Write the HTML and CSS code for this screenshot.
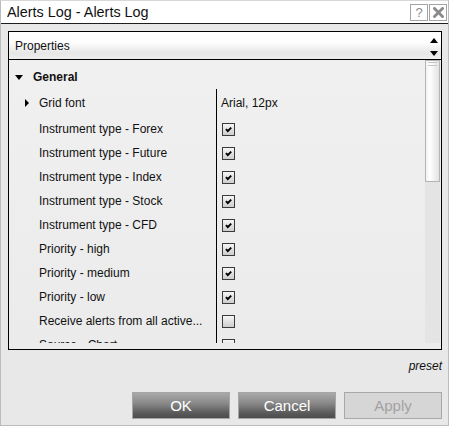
FILE: index.html
```html
<!DOCTYPE html>
<html>
<head>
<meta charset="utf-8">
<link rel="stylesheet" href="styles.css">
</head>
<body>
<div class="window">
  <div class="titlebar">
    <span class="title">Alerts Log - Alerts Log</span>
    <div class="tbtns">
      <span class="tbtn help">?</span>
      <span class="tbtn close"><svg width="11" height="11" viewBox="0 0 11 11"><path d="M1.5 1.5 L9.5 9.5 M9.5 1.5 L1.5 9.5" stroke="#8a8a8a" stroke-width="2.8" stroke-linecap="square"/></svg></span>
    </div>
  </div>
  <div class="content">
    <div class="panel">
      <div class="phead">
        <span class="ptitle">Properties</span>
        <div class="arrows">
          <svg width="8" height="5" viewBox="0 0 8 5"><path d="M0 5 L4 0 L8 5 Z" fill="#000"/></svg>
          <svg width="8" height="5" viewBox="0 0 8 5"><path d="M0 0 L4 5 L8 0 Z" fill="#000"/></svg>
        </div>
      </div>
      <div class="pbody">
        <div class="grid">
          <div class="cat"><svg class="tri-down" width="8" height="5" viewBox="0 0 8 5"><path d="M0 0 L8 0 L4 5 Z" fill="#000"/></svg><span>General</span></div>
          <div class="rows">
            <div class="row first"><div class="lbl"><svg class="tri-right" width="4" height="8" viewBox="0 0 4 8"><path d="M0 0 L4 4 L0 8 Z" fill="#000"/></svg>Grid font</div><div class="val">Arial, 12px</div></div>
            <div class="row"><div class="lbl">Instrument type - Forex</div><div class="val"><span class="cb"><svg class="ck" width="11" height="11" viewBox="0 0 11 11"><path d="M3 5.2 L4.8 7.2 L8.2 3.6" fill="none" stroke="#000" stroke-width="1.9"/></svg></span></div></div>
            <div class="row"><div class="lbl">Instrument type - Future</div><div class="val"><span class="cb"><svg class="ck" width="11" height="11" viewBox="0 0 11 11"><path d="M3 5.2 L4.8 7.2 L8.2 3.6" fill="none" stroke="#000" stroke-width="1.9"/></svg></span></div></div>
            <div class="row"><div class="lbl">Instrument type - Index</div><div class="val"><span class="cb"><svg class="ck" width="11" height="11" viewBox="0 0 11 11"><path d="M3 5.2 L4.8 7.2 L8.2 3.6" fill="none" stroke="#000" stroke-width="1.9"/></svg></span></div></div>
            <div class="row"><div class="lbl">Instrument type - Stock</div><div class="val"><span class="cb"><svg class="ck" width="11" height="11" viewBox="0 0 11 11"><path d="M3 5.2 L4.8 7.2 L8.2 3.6" fill="none" stroke="#000" stroke-width="1.9"/></svg></span></div></div>
            <div class="row"><div class="lbl">Instrument type - CFD</div><div class="val"><span class="cb"><svg class="ck" width="11" height="11" viewBox="0 0 11 11"><path d="M3 5.2 L4.8 7.2 L8.2 3.6" fill="none" stroke="#000" stroke-width="1.9"/></svg></span></div></div>
            <div class="row"><div class="lbl">Priority - high</div><div class="val"><span class="cb"><svg class="ck" width="11" height="11" viewBox="0 0 11 11"><path d="M3 5.2 L4.8 7.2 L8.2 3.6" fill="none" stroke="#000" stroke-width="1.9"/></svg></span></div></div>
            <div class="row"><div class="lbl">Priority - medium</div><div class="val"><span class="cb"><svg class="ck" width="11" height="11" viewBox="0 0 11 11"><path d="M3 5.2 L4.8 7.2 L8.2 3.6" fill="none" stroke="#000" stroke-width="1.9"/></svg></span></div></div>
            <div class="row"><div class="lbl">Priority - low</div><div class="val"><span class="cb"><svg class="ck" width="11" height="11" viewBox="0 0 11 11"><path d="M3 5.2 L4.8 7.2 L8.2 3.6" fill="none" stroke="#000" stroke-width="1.9"/></svg></span></div></div>
            <div class="row"><div class="lbl">Receive alerts from all active...</div><div class="val"><span class="cb"></span></div></div>
            <div class="row"><div class="lbl">Source - Chart</div><div class="val"><span class="cb"><svg class="ck" width="11" height="11" viewBox="0 0 11 11"><path d="M3 5.2 L4.8 7.2 L8.2 3.6" fill="none" stroke="#000" stroke-width="1.9"/></svg></span></div></div>
          </div>
        </div>
        <div class="scrollbar">
          <div class="thumb"><span class="grip"></span><span class="grip"></span></div>
          <div class="track"></div>
        </div>
      </div>
    </div>
    <div class="preset">preset</div>
    <div class="buttons">
      <button class="btn">OK</button>
      <button class="btn">Cancel</button>
      <button class="btn disabled">Apply</button>
    </div>
  </div>
</div>
</body>
</html>
```
FILE: styles.css
```css
* { box-sizing: border-box; }
html, body { margin: 0; padding: 0; }
body {
  width: 449px;
  height: 426px;
  overflow: hidden;
  font-family: "Liberation Sans", Arial, sans-serif;
  font-size: 12px;
  color: #111;
  background: #fff;
}
.window {
  width: 449px;
  height: 426px;
  border: 1px solid #bcbcbc;
  border-top-color: #d8d8d8;
  background: #e8e8e8;
  display: flex;
  flex-direction: column;
}
.titlebar {
  height: 23px;
  flex: none;
  background: #fff;
  border-bottom: 1px solid #1e1e1e;
  display: flex;
  align-items: center;
  justify-content: space-between;
  padding: 0 1px 0 6px;
}
.title {
  font-size: 14.4px;
  color: #111;
  line-height: 16px;
}
.tbtns { display: flex; gap: 1px; margin-top: 1px; }
.tbtn {
  width: 18px;
  height: 17px;
  border: 1px solid #a4a4a4;
  display: flex;
  align-items: center;
  justify-content: center;
  color: #8c8c8c;
  font-size: 13px;
  background: #fff;
}
.content {
  flex: 1;
  display: flex;
  flex-direction: column;
  padding: 7px 6px 0 7px;
}
.panel {
  height: 319px;
  border: 1px solid #000;
  display: flex;
  flex-direction: column;
  background: #eeeeee;
}
.phead {
  height: 28px;
  flex: none;
  border-bottom: 1px solid #000;
  background: linear-gradient(#ffffff 0%, #fdfdfd 40%, #e6e6e6 78%, #eeeeee 100%);
  display: flex;
  align-items: center;
  justify-content: space-between;
  padding: 0 3px 0 6px;
}
.ptitle { margin-top: 1px; color: #111; }
.arrows {
  display: flex;
  flex-direction: column;
  gap: 8px;
  margin-top: 2px;
}
.arrows svg { display: block; }
.pbody {
  flex: 1;
  display: flex;
  padding-bottom: 6px;
  background: linear-gradient(#f0f0f0, #ebebeb);
  min-height: 0;
}
.grid {
  flex: 1;
  overflow: hidden;
  padding-top: 5px;
}
.cat {
  height: 24px;
  display: flex;
  align-items: center;
  font-weight: bold;
  padding-left: 6px;
}
.tri-down { margin-right: 10px; }
.rows {
  display: flex;
  flex-direction: column;
}
.row {
  height: 24px;
  display: flex;
  align-items: center;
  flex: none;
}
.row.first { height: 28px; }
.lbl {
  width: 207px;
  padding-left: 30px;
  white-space: nowrap;
  overflow: hidden;
  position: relative;
  align-self: stretch;
  display: flex;
  align-items: center;
}
.tri-right { position: absolute; left: 16px; top: 10px; }
.val {
  align-self: stretch;
  border-left: 1px solid #000;
  padding-left: 4px;
  display: flex;
  align-items: center;
  flex: 1;
}
.cb {
  display: inline-block;
  width: 13px;
  height: 13px;
  margin-left: 1px;
  border: 1px solid #3a3a3a;
  background: linear-gradient(#f6f6f6, #cdcdcd);
}
.ck { display: block; }
.scrollbar {
  width: 15px;
  margin-right: 1px;
  display: flex;
  flex-direction: column;
}
.thumb {
  height: 122px;
  border: 1px solid #b4b4b4;
  background: linear-gradient(to right, #f2f2f2 0%, #ffffff 30%, #f4f4f4 55%, #e2e2e2 100%);
  display: flex;
  flex-direction: column;
  align-items: center;
  padding-top: 1px;
  gap: 2px;
}
.grip {
  width: 9px;
  height: 1px;
  background: #c6c6c6;
}
.track {
  flex: 1;
  background: #e4e4e4;
}
.preset {
  font-style: italic;
  text-align: right;
  margin-top: 9px;
  height: 14px;
  line-height: 14px;
  color: #111;
}
.buttons {
  display: flex;
  justify-content: flex-end;
  gap: 8px;
  margin-top: 19px;
}
.btn {
  width: 98px;
  height: 27px;
  border: 1px solid #a6a6a6;
  background: linear-gradient(#a9a9a9 0%, #8a8a8a 40%, #5a5a5a 80%, #4c4c4c 100%);
  color: #fff;
  font-family: "Liberation Sans", Arial, sans-serif;
  font-size: 15px;
  padding: 0;
}
.btn.disabled {
  background: #d6d6d6;
  border-color: #a8a8a8;
  color: #a2a2a2;
}
```
